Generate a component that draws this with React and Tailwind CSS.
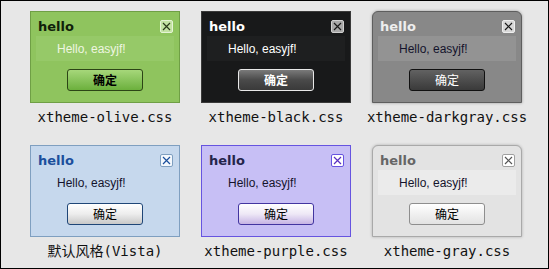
const themes = [
  {
    label: "xtheme-olive.css",
    panel: "bg-[#8fc45e] border-[#6f9f45]",
    title: "text-[#10200a]",
    close: "bg-[#c4e3a4] border-[#e6f4d6]",
    x: "#2a3a1a",
    msg: "bg-[#96c968] text-[#eef6e0]",
    btn: "bg-gradient-to-b from-[#a6d77a] to-[#6cb03c] border-[#2c4416] text-black font-bold",
  },
  {
    label: "xtheme-black.css",
    panel: "bg-[#18191a] border-[#3a3a3a]",
    title: "text-white",
    close: "bg-[#a8a8a8] border-[#d0d0d0]",
    x: "#1a1a1a",
    msg: "bg-[#1e1f20] text-white",
    btn: "bg-gradient-to-b from-[#7a7a7a] via-[#4a4a4a] to-[#3a3a3a] border-[#e8e8e8] text-white font-bold",
  },
  {
    label: "xtheme-darkgray.css",
    panel: "bg-[#888888] border-[#5e5e5e] rounded-t-md shadow-[0_0_3px_rgba(0,0,0,0.35)]",
    title: "text-[#eeeeee]",
    close: "bg-[#d8d8d8] border-[#eeeeee]",
    x: "#1a1a1a",
    msg: "bg-[#939393] text-[#14142c]",
    btn: "bg-gradient-to-b from-[#626262] to-[#3a3a3a] border-[#111111] text-white",
  },
  {
    label: "默认风格(Vista)",
    panel: "bg-[#c6d8ed] border-[#7f9fc0]",
    title: "text-[#1b4f9c]",
    close: "bg-[#f4f8fd] border-[#7f9fc0]",
    x: "#1b4f9c",
    msg: "bg-[#c6d8ed] text-[#14142c]",
    btn: "bg-gradient-to-b from-white via-[#ededed] to-[#c8c8c8] border-[#1f4677] text-black",
  },
  {
    label: "xtheme-purple.css",
    panel: "bg-[#c7bff5] border-[#6654e0]",
    title: "text-[#24244a]",
    close: "bg-white border-[#6654e0]",
    x: "#5a2fc0",
    msg: "bg-[#c7bff5] text-[#14142c]",
    btn: "bg-gradient-to-b from-white via-[#eee8f6] to-[#c6b4e4] border-[#4235a0] text-black",
  },
  {
    label: "xtheme-gray.css",
    panel: "bg-[#e3e3e3] border-[#a9a9a9] rounded-t-md shadow-[0_0_3px_rgba(0,0,0,0.25)]",
    title: "text-[#666666]",
    close: "bg-white border-[#a0a0a0]",
    x: "#555555",
    msg: "bg-[#ebebeb] text-[#14142c]",
    btn: "bg-gradient-to-b from-white to-[#e2e2e2] border-[#8e8e8e] text-black",
  },
];

const CloseBox = ({ cls, color }) => (
  <div className={`w-[13px] h-[13px] border rounded-[2px] flex items-center justify-center ${cls}`}>
    <svg width="9" height="9" viewBox="0 0 9 9">
      <path d="M1 1 L8 8 M8 1 L1 8" stroke={color} strokeWidth="1.2" fill="none" />
    </svg>
  </div>
);

const Dialog = ({ t }) => (
  <div className={`w-[150px] h-[92px] border flex flex-col ${t.panel}`}>
    <div className="flex items-center justify-between pl-[7px] pr-[6px] pt-[4px] h-[24px]">
      <span className={`font-bold text-[13px] leading-none ${t.title}`} style={{ fontFamily: "Tahoma, 'DejaVu Sans', sans-serif" }}>hello</span>
      <CloseBox cls={t.close} color={t.x} />
    </div>
    <div className={`mx-[5px] h-[25px] flex items-center pl-[21px] text-[12px] ${t.msg}`}>
      Hello, easyjf!
    </div>
    <div className="flex justify-center mt-[8px]">
      <button className={`w-[76px] h-[22px] border rounded-[3px] text-[12px] leading-none ${t.btn}`} style={{ fontFamily: "'Noto Sans CJK SC', sans-serif" }}>
        确定
      </button>
    </div>
  </div>
);

export default function App() {
  return (
    <div
      className="w-[549px] h-[269px] bg-[#e7e7e7] border border-black box-border"
      style={{ fontFamily: "'Liberation Sans', Arial, sans-serif" }}
    >
      <div className="grid grid-cols-[150px_150px_150px] gap-x-[21px] gap-y-[20px] pl-[29px] pt-[10px]">
        {themes.map((t) => (
          <div key={t.label} className="flex flex-col items-center">
            <Dialog t={t} />
            <div
              className="mt-[6px] text-[14px] leading-[16px] text-[#111] whitespace-nowrap"
              style={{ fontFamily: "'DejaVu Sans Mono', 'Noto Sans CJK SC', monospace" }}
            >
              {t.label}
            </div>
          </div>
        ))}
      </div>
    </div>
  );
}
